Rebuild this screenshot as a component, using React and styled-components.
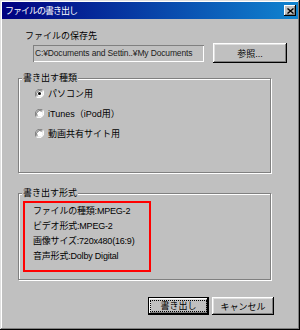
import React from "react";
import styled, { createGlobalStyle } from "styled-components";

const Global = createGlobalStyle`
  html, body { margin: 0; padding: 0; background: #c0c0c0; }
  body {
    font-family: "Liberation Sans", "Noto Sans CJK JP", sans-serif;
    font-size: 9px;
    color: #000;
  }
`;

const Window = styled.div`
  box-sizing: border-box;
  width: 300px;
  height: 330px;
  padding: 2px;
  background: #c0c0c0;
  box-shadow: inset -1px -1px #000, inset 1px 1px #dfdfdf,
    inset -2px -2px #808080, inset 2px 2px #fff;
  display: flex;
  flex-direction: column;
`;

const TitleBar = styled.div`
  height: 17px;
  display: flex;
  align-items: center;
  justify-content: space-between;
  padding: 0 2px 0 3px;
  background: linear-gradient(90deg, #000080 0%, #1084d0 100%);
`;

const TitleText = styled.span`
  color: #fff;
  font-size: 9px;
  letter-spacing: -1px;
  line-height: 12px;
`;

const CloseButton = styled.div`
  box-sizing: border-box;
  width: 12px;
  height: 11px;
  background: #c0c0c0;
  box-shadow: inset -1px -1px #000, inset 1px 1px #fff, inset -2px -2px #808080;
  display: flex;
  align-items: center;
  justify-content: center;
`;

const Body = styled.div`
  display: flex;
  flex-direction: column;
`;

const Label = styled.div`
  margin: 11px 0 0 23px;
  line-height: 12px;
  height: 12px;
`;

const PathRow = styled.div`
  display: flex;
  align-items: center;
  gap: 9px;
  margin: 1px 0 0 31px;
  height: 20px;
`;

const Field = styled.div`
  box-sizing: border-box;
  width: 171px;
  height: 17px;
  padding: 0 2px;
  display: flex;
  align-items: center;
  background: #c0c0c0;
  box-shadow: inset 1px 1px #808080, inset -1px -1px #fff;
  white-space: nowrap;
  overflow: hidden;
  font-size: 8.5px;
  letter-spacing: -0.15px;
  color: #202020;
`;

const Button = styled.div`
  box-sizing: border-box;
  width: ${(p) => p.$w}px;
  height: ${(p) => p.$h}px;
  display: flex;
  align-items: center;
  justify-content: center;
  background: #c0c0c0;
  border: ${(p) => (p.$default ? "1px solid #000" : "none")};
  box-shadow: inset -1px -1px #000, inset 1px 1px #fff,
    inset -2px -2px #808080, inset 2px 2px #dfdfdf;
`;

const Focus = styled.span`
  box-sizing: border-box;
  padding: 0 9px;
  line-height: 10px;
  border: 1px dotted #000;
`;

const Group = styled.div`
  position: relative;
  box-sizing: border-box;
  margin: ${(p) => p.$mt}px 0 0 16px;
  width: 253px;
  height: ${(p) => p.$h}px;
  border: 1px solid #808080;
  box-shadow: inset 1px 1px #fff, 1px 1px #fff;
`;

const Legend = styled.span`
  position: absolute;
  top: -7px;
  left: 3px;
  padding: 0 1px;
  line-height: 12px;
  background: #c0c0c0;
`;

const RadioList = styled.div`
  display: flex;
  flex-direction: column;
  padding: 4px 0 0 16px;
`;

const RadioRow = styled.div`
  height: 20px;
  display: flex;
  align-items: center;
  gap: 4px;
`;

const Radio = ({ checked }) => (
  <svg width="9" height="9" viewBox="0 0 12 12">
    <path d="M10.2 1.8 A6 6 0 0 0 1.8 10.2" fill="none" stroke="#808080" strokeWidth="1.4" />
    <path d="M1.8 10.2 A6 6 0 0 0 10.2 1.8" fill="none" stroke="#fff" strokeWidth="1.4" />
    <circle cx="6" cy="6" r="4.4" fill="#fff" />
    <path d="M9 3 A4.3 4.3 0 0 0 3 9" fill="none" stroke="#404040" strokeWidth="1" />
    {checked && <circle cx="6" cy="6" r="2" fill="#000" />}
  </svg>
);

const InfoBox = styled.div`
  box-sizing: border-box;
  margin: 7px 0 0 4px;
  width: 128px;
  height: 71px;
  border: 2px solid #ff0000;
  padding: 1px 0 0 8px;
  display: flex;
  flex-direction: column;
`;

const InfoLine = styled.div`
  height: 15px;
  line-height: 15px;
  white-space: nowrap;
  letter-spacing: -0.2px;
`;

const ButtonRow = styled.div`
  display: flex;
  justify-content: flex-end;
  gap: 3px;
  margin-top: 17px;
  padding-right: 24px;
`;

export default function App() {
  return (
    <>
      <Global />
      <Window>
        <TitleBar>
          <TitleText>ファイルの書き出し</TitleText>
          <CloseButton>
            <svg width="7" height="6" viewBox="0 0 7 6">
              <path d="M0.5 0.5 L6.5 5.5 M6.5 0.5 L0.5 5.5" stroke="#000" strokeWidth="1.4" />
            </svg>
          </CloseButton>
        </TitleBar>
        <Body>
          <Label>ファイルの保存先</Label>
          <PathRow>
            <Field>C:¥Documents and Settin..¥My Documents</Field>
            <Button $w={74} $h={20}>参照...</Button>
          </PathRow>
          <Group $mt={15} $h={95}>
            <Legend>書き出す種類</Legend>
            <RadioList>
              <RadioRow><Radio checked />パソコン用</RadioRow>
              <RadioRow><Radio />iTunes（iPod用）</RadioRow>
              <RadioRow><Radio />動画共有サイト用</RadioRow>
            </RadioList>
          </Group>
          <Group $mt={20} $h={87}>
            <Legend>書き出す形式</Legend>
            <InfoBox>
              <InfoLine>ファイルの種類:MPEG-2</InfoLine>
              <InfoLine>ビデオ形式:MPEG-2</InfoLine>
              <InfoLine>画像サイズ:720x480(16:9)</InfoLine>
              <InfoLine>音声形式:Dolby Digital</InfoLine>
            </InfoBox>
          </Group>
          <ButtonRow>
            <Button $w={61} $h={18} $default><Focus>書き出し</Focus></Button>
            <Button $w={62} $h={18}>キャンセル</Button>
          </ButtonRow>
        </Body>
      </Window>
    </>
  );
}
